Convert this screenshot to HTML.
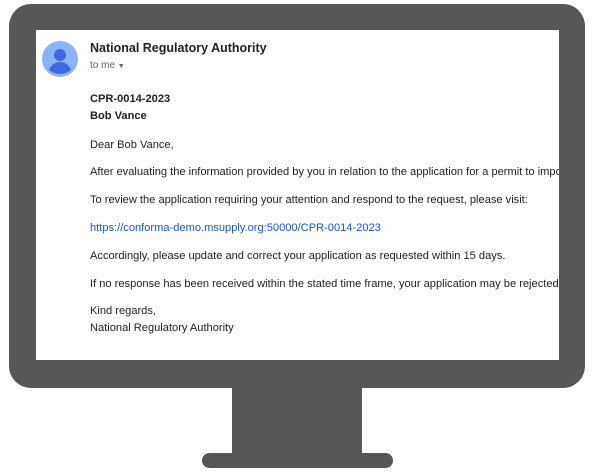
<!DOCTYPE html>
<html><head><style>
body{margin:0;width:598px;height:475px;background:#fff;position:relative;overflow:hidden;font-family:"Liberation Sans",Arial,sans-serif}
.mon{position:absolute;left:9px;top:4px;width:576px;height:384px;background:#575757;border-radius:22px}
.scr{position:absolute;left:36px;top:30px;width:523px;height:330px;background:#fff;overflow:hidden}
.stand{position:absolute;left:232px;top:386px;width:130px;height:70px;background:#575757}
.base{position:absolute;left:202px;top:453px;width:191px;height:15px;background:#575757;border-radius:8px}
.t{position:absolute;left:54px;white-space:nowrap;font-size:11.1px;color:#222}
</style></head><body>
<div class="mon"></div>
<div class="stand"></div>
<div class="base"></div>
<div class="scr">
<svg style="position:absolute;left:6px;top:11px" width="36" height="36" viewBox="0 0 36 36"><circle cx="18" cy="18" r="18" fill="#8ab4f8"/><circle cx="18" cy="14" r="6" fill="#4169e1"/><path d="M7 29c2-6 7-8 11-8s9 2 11 8a17 17 0 0 1-22 0z" fill="#4169e1"/></svg>
<div class="t" style="top:11px;font-size:12.5px;font-weight:bold;color:#222">National Regulatory Authority</div>
<div class="t" style="top:30px;font-size:10px;color:#666">to me <span style="font-size:7px">▼</span></div>
<div class="t" style="top:63px;font-weight:bold">CPR-0014-2023</div>
<div class="t" style="top:80px;font-weight:bold">Bob Vance</div>
<div class="t" style="top:109px">Dear Bob Vance,</div>
<div class="t" style="top:136px">After evaluating the information provided by you in relation to the application for a permit to import</div>
<div class="t" style="top:164px">To review the application requiring your attention and respond to the request, please visit:</div>
<div class="t" style="top:192px;color:#1a55d8">https://conforma-demo.msupply.org:50000/CPR-0014-2023</div>
<div class="t" style="top:220px">Accordingly, please update and correct your application as requested within 15 days.</div>
<div class="t" style="top:248px">If no response has been received within the stated time frame, your application may be rejected.</div>
<div class="t" style="top:275px">Kind regards,</div>
<div class="t" style="top:292px">National Regulatory Authority</div>
</div>
</body></html>
